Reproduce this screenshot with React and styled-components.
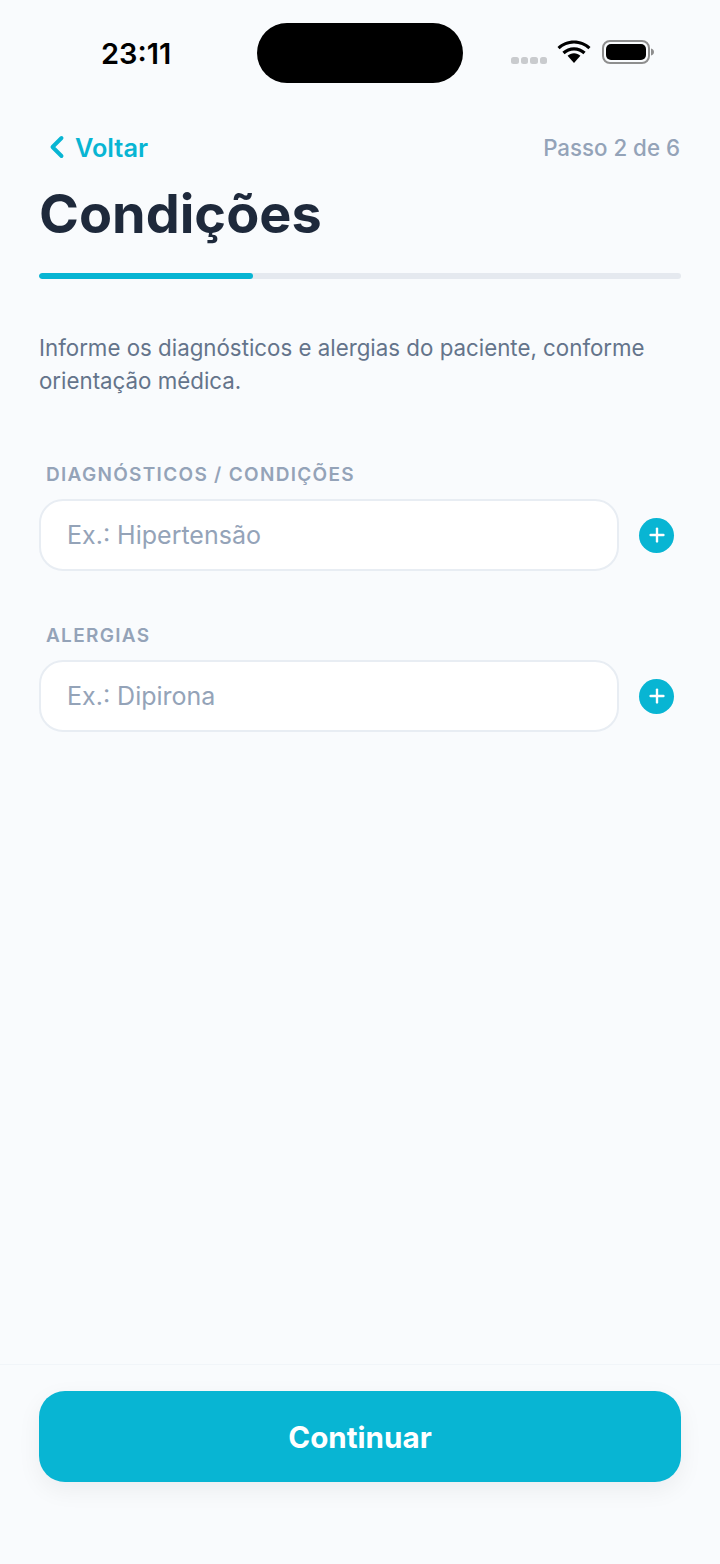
import React from 'react';
import styled, { createGlobalStyle } from 'styled-components';
import { ChevronLeft, Plus } from 'lucide-react';

const GlobalStyle = createGlobalStyle`
  * { box-sizing: border-box; }
  html, body { margin: 0; padding: 0; background: #f8fafc; }
  body { font-family: Inter, "Liberation Sans", sans-serif; }
`

const Screen = styled.div`
  width: 720px;
  height: 1564px;
  display: flex;
  flex-direction: column;
  background: #f9fbfd;
  overflow: hidden;
`

const StatusBar = styled.div`
  height: 127px;
  flex: none;
  padding-top: 23px;
  display: grid;
  grid-template-columns: 257px 206px 1fr;
  align-items: start;
`

const Time = styled.div`
  padding: 14px 0 0 101px;
  font-size: 29px;
  line-height: 34px;
  font-weight: 600;
  color: #000;
`

const Island = styled.div`
  height: 60px;
  border-radius: 30px;
  background: #000;
`

const StatusIcons = styled.div`
  display: flex;
  align-items: center;
  padding: 16px 0 0 48px;
`

const Dots = styled.div`
  display: flex;
  gap: 2px;
  margin: 17px 10px 0 0;
`

const Dot = styled.span`
  width: 7.5px;
  height: 7.5px;
  border-radius: 2.5px;
  background: #c9cbce;
`

const Content = styled.main`
  flex: 1;
  padding: 0 39px;
`

const TopRow = styled.div`
  display: flex;
  align-items: center;
  justify-content: space-between;
  height: 40px;
  margin-bottom: 13px;
`

const Back = styled.div`
  display: flex;
  align-items: center;
  color: #08b5d3;
  font-size: 25.3px;
  font-weight: 600;
`

const Step = styled.div`
  margin-right: 1px;
  color: #94a3b8;
  font-size: 22.3px;
  font-weight: 500;
`

const Title = styled.h1`
  margin: 0;
  color: #1e293b;
  font-size: 54px;
  line-height: 68px;
  font-weight: 700;
`

const Track = styled.div`
  margin-top: 25px;
  height: 6px;
  border-radius: 3px;
  background: #e5e9ef;
  overflow: hidden;
`

const Fill = styled.div`
  height: 100%;
  border-radius: 3px;
  background: #08b5d3;
`

const Description = styled.p`
  margin: 52px 0 0;
  color: #64748b;
  font-size: 22.3px;
  line-height: 33px;
`

const Field = styled.section`
  margin-top: ${props => props.top};
`

const Label = styled.div`
  padding-left: 7px;
  margin-bottom: 12px;
  color: #94a3b8;
  font-size: 19px;
  line-height: 24px;
  font-weight: 600;
  letter-spacing: 1.3px;
`

const InputRow = styled.div`
  display: flex;
  align-items: center;
`

const Input = styled.input`
  width: 580px;
  height: 72px;
  padding: 0 26px;
  border: 2px solid #e8edf3;
  border-radius: 24px;
  background: #fff;
  font-family: inherit;
  font-size: 25px;
  outline: none;

  &::placeholder {
    color: #94a3b8;
    opacity: 1;
  }
`

const AddButton = styled.div`
  width: 35px;
  height: 35px;
  margin-left: 20px;
  border-radius: 50%;
  background: #08b5d3;
  color: #fff;
  display: flex;
  align-items: center;
  justify-content: center;
`

const Footer = styled.footer`
  height: 200px;
  flex: none;
  padding: 26px 39px 0;
  border-top: 1px solid #f1f5f9;
`

const Primary = styled.div`
  height: 91px;
  border-radius: 26px;
  background: #08b5d3;
  color: #fff;
  font-size: 29.6px;
  font-weight: 700;
  display: flex;
  align-items: center;
  justify-content: center;
  box-shadow: 0 8px 24px rgba(15, 23, 42, 0.06);
`

const fields = [
  { label: 'DIAGNÓSTICOS / CONDIÇÕES', placeholder: 'Ex.: Hipertensão', top: '66px' },
  { label: 'ALERGIAS', placeholder: 'Ex.: Dipirona', top: '53px' },
]

const App = () => {
  return (
    <Screen>
      <GlobalStyle />
      <StatusBar>
        <Time>23:11</Time>
        <Island />
        <StatusIcons>
          <Dots>
            <Dot /><Dot /><Dot /><Dot />
          </Dots>
          <svg width="34" height="26" viewBox="0 0 34 26">
            <path d="M17 3.5c5.6 0 10.6 2.2 14.4 5.8l2.1-2.4C29.2 2.800 23.400 .4 17 .4S4.800 2.800.5 6.900l2.100 2.400C6.400 5.700 11.400 3.500 17 3.500z" transform="translate(0 1)" />
            <path d="M17 10.500c3.600 0 6.900 1.400 9.400 3.700l2.200-2.400c-3.100-2.900-7.200-4.600-11.600-4.600S8.500 8.900 5.400 11.800l2.200 2.400c2.500-2.300 5.800-3.700 9.400-3.700z" transform="translate(0 1)" />
            <path d="M17 13.200c-2.500 0-4.600.9-6.400 2.500l6.400 7.300 6.400-7.300c-1.800-1.600-3.900-2.500-6.400-2.500z" transform="translate(0 1)" />
          </svg>
          <svg width="52" height="26" viewBox="0 0 52 26" style={{ marginLeft: 11 }}>
            <rect x="1" y="2" width="46" height="22" rx="7" fill="none" stroke="#8e8e8e" strokeWidth="2" />
            <rect x="4" y="5" width="40" height="16" rx="5" fill="#000" />
            <path d="M49 9.500c1.800.5 3 1.800 3 3.500s-1.200 3-3 3.500z" fill="#8e8e8e" />
          </svg>
        </StatusIcons>
      </StatusBar>
      <Content>
        <TopRow>
          <Back>
            <ChevronLeft size={36} strokeWidth={2.6} />
            Voltar
          </Back>
          <Step>Passo 2 de 6</Step>
        </TopRow>
        <Title>Condições</Title>
        <Track>
          <Fill style={{ width: `${(1 / 3) * 100}%` }} />
        </Track>
        <Description>
          Informe os diagnósticos e alergias do paciente, conforme orientação médica.
        </Description>
        {fields.map(field => (
          <Field key={field.label} top={field.top}>
            <Label>{field.label}</Label>
            <InputRow>
              <Input placeholder={field.placeholder} readOnly />
              <AddButton>
                <Plus size={22} strokeWidth={2.6} />
              </AddButton>
            </InputRow>
          </Field>
        ))}
      </Content>
      <Footer>
        <Primary>Continuar</Primary>
      </Footer>
    </Screen>
  )
}

export default App
